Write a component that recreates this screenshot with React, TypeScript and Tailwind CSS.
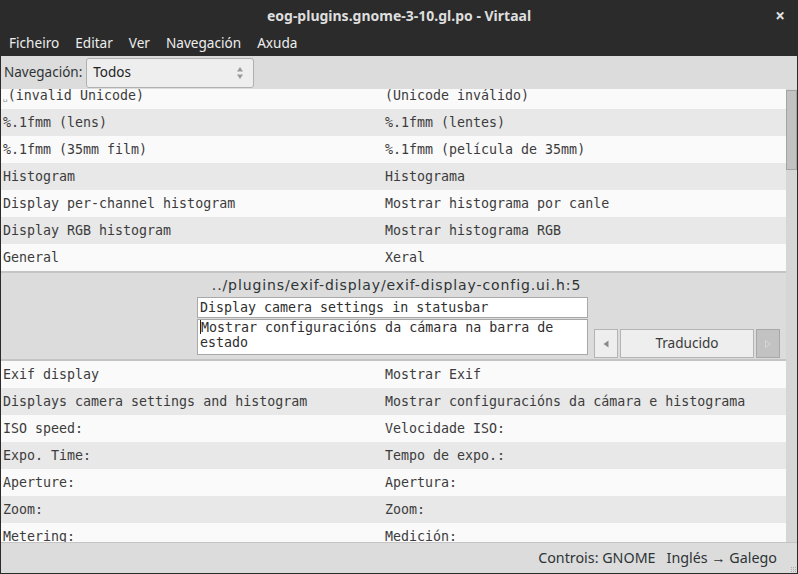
import React from "react";

const sans = { fontFamily: '"Noto Sans", "Open Sans", sans-serif' };
const mono = { fontFamily: '"DejaVu Sans Mono", "Liberation Mono", monospace' };
const wide = { fontFamily: '"DejaVu Sans", "Noto Sans", sans-serif' };

const upperRows: [React.ReactNode, string][] = [
  [
    <>
      <span className="text-[8px] text-[#888]">␣</span>(invalid Unicode)
    </>,
    "(Unicode inválido)",
  ],
  ["%.1fmm (lens)", "%.1fmm (lentes)"],
  ["%.1fmm (35mm film)", "%.1fmm (película de 35mm)"],
  ["Histogram", "Histograma"],
  ["Display per-channel histogram", "Mostrar histograma por canle"],
  ["Display RGB histogram", "Mostrar histograma RGB"],
  ["General", "Xeral"],
];

const lowerRows: [string, string][] = [
  ["Exif display", "Mostrar Exif"],
  ["Displays camera settings and histogram", "Mostrar configuracións da cámara e histograma"],
  ["ISO speed:", "Velocidade ISO:"],
  ["Expo. Time:", "Tempo de expo.:"],
  ["Aperture:", "Apertura:"],
  ["Zoom:", "Zoom:"],
  ["Metering:", "Medición:"],
];

function Row({ src, tgt, odd }: { src: React.ReactNode; tgt: string; odd: boolean }) {
  return (
    <div
      className={`h-[27px] shrink-0 flex items-center text-[13.3px] text-[#3c3c3c] whitespace-nowrap ${
        odd ? "bg-[#e8e8e8]" : "bg-[#fafafa]"
      }`}
      style={mono}
    >
      <div className="w-[384px] pl-[2px]">{src}</div>
      <div className="flex-1">{tgt}</div>
    </div>
  );
}

export default function App() {
  const menus = ["Ficheiro", "Editar", "Ver", "Navegación", "Axuda"];
  return (
    <div className="w-[798px] h-[574px] flex flex-col overflow-hidden bg-[#2b2b2b]" style={sans}>
      {/* title bar */}
      <div className="h-[31px] shrink-0 relative flex items-center justify-center">
        <span className="text-[14px] font-bold text-[#dedede]">eog-plugins.gnome-3-10.gl.po - Virtaal</span>
        <span className="absolute right-[13px] top-[3px] text-[17px] font-bold text-[#e0e0e0]">×</span>
      </div>
      {/* menu bar */}
      <div className="h-[25px] shrink-0 flex items-center pl-[9px] gap-[16px] text-[13.6px] text-[#eeeeee]">
        {menus.map((m) => (
          <span key={m}>{m}</span>
        ))}
      </div>

      <div className="flex-1 mx-px mb-px bg-[#dcdcdc] flex flex-col min-h-0">
        {/* toolbar */}
        <div className="h-[33px] shrink-0 flex items-center text-[13.5px] text-[#2e3436]">
          <span className="pl-[3px] pr-[4px]">Navegación:</span>
          <div className="w-[168px] h-[30px] border border-[#b0b0b0] rounded-[3px] bg-[#eeeeee] flex items-center px-[6px]">
            <span className="flex-1 text-[#222]">Todos</span>
            <svg width="8" height="14" viewBox="0 0 8 14" className="mr-[3px]">
              <path d="M4 1 L7 5.5 L1 5.5 Z" fill="#9a9a9a" />
              <path d="M4 13 L7 8.5 L1 8.5 Z" fill="#9a9a9a" />
            </svg>
          </div>
        </div>

        {/* list area */}
        <div className="flex-1 flex min-h-0">
          <div className="flex-1 flex flex-col min-w-0">
            <div className="h-[182px] shrink-0 overflow-hidden">
              <div className="mt-[-7px] flex flex-col">
                {upperRows.map(([s, t], i) => (
                  <Row key={i} src={s} tgt={t} odd={i % 2 === 1} />
                ))}
              </div>
            </div>
            <div className="h-[2px] shrink-0 bg-[#c4c4c4]" />

            {/* editor */}
            <div className="h-[86px] shrink-0 flex pl-[196px]">
              <div className="w-[391px] flex flex-col">
                <div
                  className="h-[24px] flex items-center justify-center pl-[8px] text-[14px] tracking-[0.9px] text-[#2e3436] whitespace-nowrap"
                  style={wide}
                >
                  ../plugins/exif-display/exif-display-config.ui.h:5
                </div>
                <div
                  className="h-[21px] border border-[#a8a8a8] bg-white flex items-center px-[2px] text-[13.3px] text-[#2e2e2e] whitespace-nowrap"
                  style={mono}
                >
                  Display camera settings in statusbar
                </div>
                <div
                  className="h-[36px] mt-px border border-[#a8a8a8] bg-white px-[2px] text-[13.3px] leading-[15px] text-[#2e2e2e]"
                  style={mono}
                >
                  <span className="inline-block w-px h-[14px] bg-[#222] align-[-2px]" />
                  Mostrar configuracións da cámara na barra de estado
                </div>
              </div>
              <div className="ml-[6px] flex items-end gap-[2px] pb-[1px]">
                <div className="w-[24px] h-[29px] border border-[#b4b4b4] bg-[#eeeeee] flex items-center justify-center">
                  <svg width="6" height="8" viewBox="0 0 6 8">
                    <path d="M0.5 4 L5.5 0.5 L5.5 7.5 Z" fill="#8a8a8a" />
                  </svg>
                </div>
                <div className="w-[134px] h-[29px] border border-[#b4b4b4] bg-[#eeeeee] flex items-center justify-center text-[13.6px] text-[#3a3a3a]">
                  Traducido
                </div>
                <div className="w-[24px] h-[29px] border border-[#a8a8a8] bg-[#c2c2c2] flex items-center justify-center">
                  <svg width="6" height="8" viewBox="0 0 6 8">
                    <path d="M5.5 4 L0.5 0.5 L0.5 7.5 Z" fill="none" stroke="#d6d6d6" strokeWidth="1" />
                  </svg>
                </div>
              </div>
            </div>
            <div className="h-[2px] shrink-0 bg-[#c4c4c4]" />

            <div className="flex-1 min-h-0 overflow-hidden flex flex-col">
              {lowerRows.map(([s, t], i) => (
                <Row key={i} src={s} tgt={t} odd={i % 2 === 1} />
              ))}
            </div>
          </div>

          {/* scrollbar */}
          <div className="w-[11px] shrink-0 bg-[#d6d6d6] pt-px">
            <div className="h-[80px] border border-[#a4a4a4] bg-[#c2c2c2]" />
          </div>
        </div>

        {/* status bar */}
        <div className="h-[31px] shrink-0 border-t border-[#c4c4c4] flex items-center justify-end relative text-[14.3px] text-[#2e3436]">
          <span className="mr-[11px]">Controis: GNOME</span>
          <span className="mr-[20px]">Inglés → Galego</span>
          <div className="absolute right-[1px] bottom-[1px] grid grid-cols-3 gap-[1px]">
            {Array.from({ length: 9 }).map((_, i) => (
              <span key={i} className="w-[1px] h-[1px] bg-[#b0b0b0]" />
            ))}
          </div>
        </div>
      </div>
    </div>
  );
}
